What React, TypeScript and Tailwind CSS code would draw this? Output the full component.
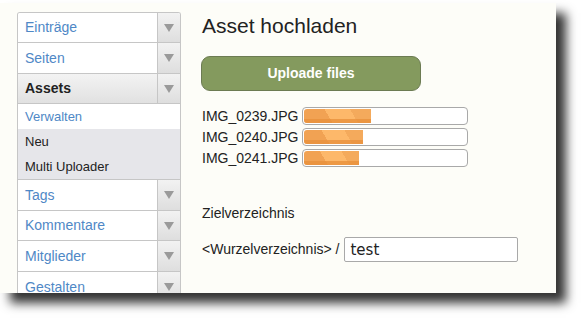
const font = "font-['Liberation_Sans',Arial,sans-serif]";

const Arrow = () => (
  <svg width="10" height="8" viewBox="0 0 10 8">
    <polygon points="0,0 10,0 5,8" fill="#9a9a9a" />
  </svg>
);

type Item = { label: string; h: string; active?: boolean };

const MenuRow = ({ label, h, active }: Item) => (
  <div
    className={`flex ${h} border-b border-[#c6c6c6] ${
      active ? "bg-[linear-gradient(#f3f3f3,#e1e1e1)]" : "bg-white"
    }`}
  >
    <div
      className={`flex-1 flex items-center pl-[7px] text-[14px] ${
        active ? "font-bold text-[#222]" : "text-[#4f88c6]"
      }`}
    >
      {label}
    </div>
    <div className="w-[23px] flex items-center justify-center border-l border-[#c6c6c6] bg-[linear-gradient(#f2f2f2,#dedede)]">
      <Arrow />
    </div>
  </div>
);

const files = [
  { name: "IMG_0239.JPG", fill: 67 },
  { name: "IMG_0240.JPG", fill: 59 },
  { name: "IMG_0241.JPG", fill: 55 },
];

export default function App() {
  return (
    <div className={`w-[581px] h-[318px] bg-white overflow-hidden ${font}`}>
      <div className="mt-[3px] w-[556px] h-[290px] bg-[#fdfdf8] shadow-[10px_10px_10px_rgba(0,0,0,0.8)] overflow-hidden flex">
        {/* Sidebar */}
        <div className="ml-[17px] mt-[9px] w-[164px] border-x border-t border-[#c6c6c6] rounded-t-[3px] overflow-hidden self-start">
          <MenuRow label="Einträge" h="h-[30px]" />
          <MenuRow label="Seiten" h="h-[31px]" />
          <MenuRow label="Assets" h="h-[30px]" active />
          <div className="h-[25px] bg-white flex items-center pl-[7px] text-[13px] text-[#4f88c6]">
            Verwalten
          </div>
          <div className="bg-[#e6e6ea] border-b border-[#c6c6c6]">
            <div className="h-[25px] flex items-center pl-[7px] text-[13px] text-[#222]">Neu</div>
            <div className="h-[25px] flex items-center pl-[7px] text-[13px] text-[#222]">
              Multi Uploader
            </div>
          </div>
          <MenuRow label="Tags" h="h-[31px]" />
          <MenuRow label="Kommentare" h="h-[30px]" />
          <MenuRow label="Mitglieder" h="h-[31px]" />
          <MenuRow label="Gestalten" h="h-[31px]" />
        </div>

        {/* Main */}
        <div className="ml-[20px] pt-[11px] flex flex-col text-[#222]">
          <h1 className="text-[21px] leading-[24px] ml-[1px]">Asset hochladen</h1>

          <button className="mt-[18px] w-[220px] h-[35px] rounded-[9px] bg-[#849a5e] border border-[#6c7b53] text-white font-bold text-[14px]">
            Uploade files
          </button>

          <div className="mt-[16px] flex flex-col gap-[3px] ml-[1px]">
            {files.map((f) => (
              <div key={f.name} className="flex items-center h-[18px]">
                <span className="text-[14px] w-[100px]">{f.name}</span>
                <div className="w-[166px] h-[18px] rounded-[4px] border border-[#a9a9a9] bg-white overflow-hidden p-px">
                  <div className="h-full relative rounded-l-[3px] overflow-hidden" style={{ width: f.fill }}>
                    <div className="absolute inset-0 bg-[linear-gradient(60deg,#f1a253_0%,#f1a253_38%,#fdb86a_38%,#fdb86a_72%,#f4aa5c_72%)]" />
                    <div className="absolute left-0 right-0 bottom-0 h-[4px] bg-[#e9913c]/80" />
                  </div>
                </div>
              </div>
            ))}
          </div>

          <div className="mt-[38px] text-[14px] leading-[16px] ml-[1px]">Zielverzeichnis</div>

          <div className="mt-[16px] flex items-center ml-[1px]">
            <span className="text-[14px]">&lt;Wurzelverzeichnis&gt; /</span>
            <input
              readOnly
              value="test"
              className="ml-[5px] w-[174px] h-[25px] border border-[#a9a9a9] rounded-[2px] bg-white px-[5px] text-[15px] text-[#222] font-['DejaVu_Sans',sans-serif] outline-none"
            />
          </div>
        </div>
      </div>
    </div>
  );
}
